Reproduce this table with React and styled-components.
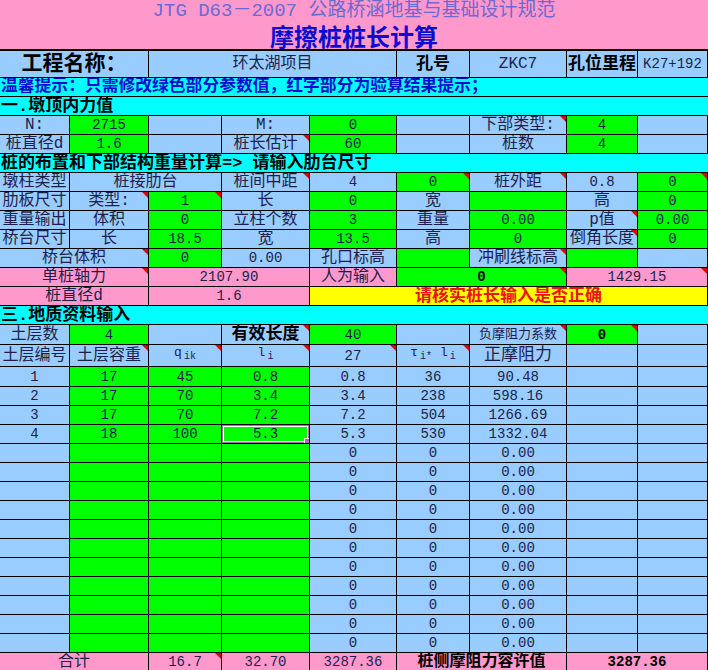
import React from "react";
import styled, { createGlobalStyle, css } from "styled-components";

const COLS = "70px 79px 73px 88px 87px 73px 97px 71px 70px";

const FILL = {
  b: "#99ccff",
  g: "#00ff00",
  p: "#ff99cc",
  c: "#00ffff",
  y: "#ffff00",
};

const GlobalStyle = createGlobalStyle`
  html, body {
    margin: 0;
    padding: 0;
    background: #fff;
    overflow: hidden;
  }
  body {
    font-family: "Liberation Mono", "Noto Sans CJK SC", monospace;
  }
`;

const Sheet = styled.div`
  width: 708px;
  height: 670px;
  overflow: hidden;
`;

const Banner = styled.div`
  background: #ff99cc;
  border-bottom: 2px solid #000;
`;

const SubTitle = styled.div`
  height: 22px;
  display: flex;
  align-items: center;
  justify-content: center;
  line-height: 1;
  font-size: 19px;
  color: #6a6ad2;
  white-space: nowrap;
  overflow: hidden;
`;

const MainTitle = styled.div`
  height: 27px;
  display: flex;
  align-items: center;
  justify-content: center;
  line-height: 1;
  font-family: "Noto Sans CJK SC", sans-serif;
  font-size: 24px;
  font-weight: 700;
  color: #0c0cd0;
`;

const Row = styled.div`
  display: grid;
  grid-template-columns: ${COLS};
  height: ${(p) => p.$h || 19}px;
`;

const Cell = styled.div`
  grid-column: span ${(p) => p.$span || 1};
  position: relative;
  box-sizing: border-box;
  border-right: 1px solid #000;
  border-bottom: 1px solid #000;
  background: ${(p) => FILL[p.$bg || "b"]};
  color: ${(p) => p.$color || "#1e1e4a"};
  font-size: ${(p) => p.$size || 16}px;
  font-weight: ${(p) => (p.$bold ? 700 : 400)};
  display: flex;
  align-items: ${(p) => (p.$low ? "flex-end" : "center")};
  justify-content: ${(p) => (p.$left ? "flex-start" : "center")};
  padding-bottom: ${(p) => (p.$low ? 4 : 0)}px;
  white-space: nowrap;
  overflow: hidden;
  line-height: 1;

  ${(p) =>
    p.$num &&
    css`
      font-size: ${p.$size || 14}px;
    `}

  ${(p) =>
    p.$note &&
    css`
      &::after {
        content: "";
        position: absolute;
        top: 0;
        right: 0;
        border-top: 6px solid #e00000;
        border-left: 6px solid transparent;
      }
    `}

  ${(p) =>
    p.$sel &&
    css`
      box-shadow: inset 0 0 0 1px #c060c0, inset 0 0 0 2px #fff;
      &::after {
        content: "";
        position: absolute;
        right: -1px;
        bottom: -1px;
        width: 4px;
        height: 4px;
        background: #c060c0;
        border: 1px solid #fff;
      }
    `}
`;

const Band = styled.div`
  box-sizing: border-box;
  height: ${(p) => p.$h || 19}px;
  background: ${(p) => FILL[p.$bg || "c"]};
  border-bottom: 1px solid #000;
  color: ${(p) => p.$color || "#000"};
  font-size: ${(p) => p.$size || 17}px;
  font-weight: 700;
  display: flex;
  align-items: center;
  padding-left: 1px;
  white-space: nowrap;
  overflow: hidden;
  line-height: 1;
`;

const Sym = styled.span`
  font-size: 13px;
  line-height: 1;
`;

const Sub = styled.span`
  font-size: 10px;
  margin-left: 2px;
  vertical-align: -3px;
`;

const isNum = (t) => /^[\d.]+$/.test(t);

const C = ({ t = "", bg = "b", ...o }) => (
  <Cell
    $bg={bg}
    $num={typeof t === "string" && isNum(t)}
    $span={o.span}
    $note={o.note}
    $bold={o.bold}
    $size={o.size}
    $color={o.color}
    $sel={o.sel}
    $low={o.low}
  >
    {t}
  </Cell>
);

const upper = [
  [
    { t: "N:" },
    { t: "2715", bg: "g" },
    {},
    { t: "M:" },
    { t: "0", bg: "g" },
    {},
    { t: "下部类型:", note: true },
    { t: "4", bg: "g" },
    {},
  ],
  [
    { t: "桩直径d" },
    { t: "1.6", bg: "g" },
    {},
    { t: "桩长估计", note: true },
    { t: "60", bg: "g" },
    {},
    { t: "桩数" },
    { t: "4", bg: "g" },
    {},
  ],
];

const middle = [
  [
    { t: "墩柱类型" },
    { t: "桩接肋台", span: 2 },
    { t: "桩间中距", note: true },
    { t: "4" },
    { t: "0", bg: "g", note: true },
    { t: "桩外距", note: true },
    { t: "0.8" },
    { t: "0", bg: "g", note: true },
  ],
  [
    { t: "肋板尺寸" },
    { t: "类型:", note: true },
    { t: "1", bg: "g", note: true },
    { t: "长" },
    { t: "0", bg: "g" },
    { t: "宽" },
    { bg: "g" },
    { t: "高" },
    { t: "0", bg: "g" },
  ],
  [
    { t: "重量输出" },
    { t: "体积" },
    { t: "0", bg: "g" },
    { t: "立柱个数" },
    { t: "3", bg: "g" },
    { t: "重量" },
    { t: "0.00", bg: "g" },
    { t: "p值", note: true },
    { t: "0.00", bg: "g" },
  ],
  [
    { t: "桥台尺寸" },
    { t: "长" },
    { t: "18.5", bg: "g" },
    { t: "宽" },
    { t: "13.5", bg: "g" },
    { t: "高" },
    { t: "0", bg: "g" },
    { t: "倒角长度", note: true },
    { t: "0", bg: "g" },
  ],
  [
    { t: "桥台体积", span: 2, note: true },
    { t: "0", bg: "g" },
    { t: "0.00" },
    { t: "孔口标高" },
    { bg: "g" },
    { t: "冲刷线标高", note: true },
    { bg: "g" },
    {},
  ],
  [
    { t: "单桩轴力", bg: "p", span: 2, note: true },
    { t: "2107.90", bg: "p", span: 2 },
    { t: "人为输入", bg: "p" },
    { t: "0", bg: "g", span: 2, note: true, bold: true, color: "#000" },
    { t: "1429.15", bg: "p", span: 2, note: true },
  ],
  [
    { t: "桩直径d", bg: "p", span: 2 },
    { t: "1.6", bg: "p", span: 2 },
    {
      t: "请核实桩长输入是否正确",
      bg: "y",
      span: 5,
      bold: true,
      size: 17,
      color: "#ee1111",
    },
  ],
];

const layers = [
  ["1", "17", "45", "0.8", "0.8", "36", "90.48"],
  ["2", "17", "70", "3.4", "3.4", "238", "598.16"],
  ["3", "17", "70", "7.2", "7.2", "504", "1266.69"],
  ["4", "18", "100", "5.3", "5.3", "530", "1332.04"],
];

const blanks = Array.from({ length: 11 }, () => ["", "", "", "", "0", "0", "0.00"]);

const LayerRow = ({ d, h, last }) => (
  <Row $h={h}>
    <C t={d[0]} />
    <C t={d[1]} bg="g" />
    <C t={d[2]} bg="g" />
    <C t={d[3]} bg="g" sel={last} />
    <C t={d[4]} />
    <C t={d[5]} />
    <C t={d[6]} />
    <C />
    <C />
  </Row>
);

export default function App() {
  return (
    <Sheet>
      <GlobalStyle />
      <Banner>
        <SubTitle>JTG D63－2007 公路桥涵地基与基础设计规范</SubTitle>
        <MainTitle>摩擦桩桩长计算</MainTitle>
      </Banner>

      <Row $h={27}>
        <C t="工程名称：" span={2} bold size={21} color="#000" />
        <C t="环太湖项目" span={3} />
        <C t="孔号" bold size={17} color="#000" />
        <C t="ZKC7" />
        <C t="孔位里程" bold size={17} color="#000" />
        <C t="K27+192" size={14} />
      </Row>

      <Band $color="#0c0ccc" $size={16.8}>
        温馨提示：只需修改绿色部分参数值，红字部分为验算结果提示；
      </Band>
      <Band>一.墩顶内力值</Band>

      {upper.map((r, i) => (
        <Row key={i}>
          {r.map((c, j) => (
            <C key={j} {...c} />
          ))}
        </Row>
      ))}

      <Band>桩的布置和下部结构重量计算=&gt; 请输入肋台尺寸</Band>

      {middle.map((r, i) => (
        <Row key={i}>
          {r.map((c, j) => (
            <C key={j} {...c} />
          ))}
        </Row>
      ))}

      <Band>三.地质资料输入</Band>

      <Row $h={20}>
        <C t="土层数" />
        <C t="4" bg="g" />
        <C />
        <C t="有效长度" bold size={17} color="#000" note />
        <C t="40" bg="g" />
        <C />
        <C t="负摩阻力系数" size={13} note />
        <C t="0" bg="g" bold color="#000" note />
        <C />
      </Row>

      <Row $h={22}>
        <C t="土层编号" />
        <C t="土层容重" note />
        <C
          low
          note
          t={
            <Sym>
              q<Sub>ik</Sub>
            </Sym>
          }
        />
        <C
          low
          note
          t={
            <Sym>
              l<Sub>i</Sub>
            </Sym>
          }
        />
        <C t="27" note />
        <C
          low
          note
          t={
            <Sym>
              τ<Sub>i*</Sub> l<Sub>i</Sub>
            </Sym>
          }
        />
        <C t="正摩阻力" size={17} />
        <C />
        <C />
      </Row>

      {layers.map((d, i) => (
        <LayerRow key={i} d={d} h={i === 0 ? 20 : 19} last={i === 3} />
      ))}
      {blanks.map((d, i) => (
        <LayerRow key={"b" + i} d={d} />
      ))}

      <Row>
        <C t="合计" bg="p" span={2} />
        <C t="16.7" bg="p" note />
        <C t="32.70" bg="p" />
        <C t="3287.36" bg="p" />
        <C t="桩侧摩阻力容许值" bg="p" span={2} bold color="#000" />
        <C t="3287.36" bg="p" span={2} bold color="#000" />
      </Row>
    </Sheet>
  );
}
